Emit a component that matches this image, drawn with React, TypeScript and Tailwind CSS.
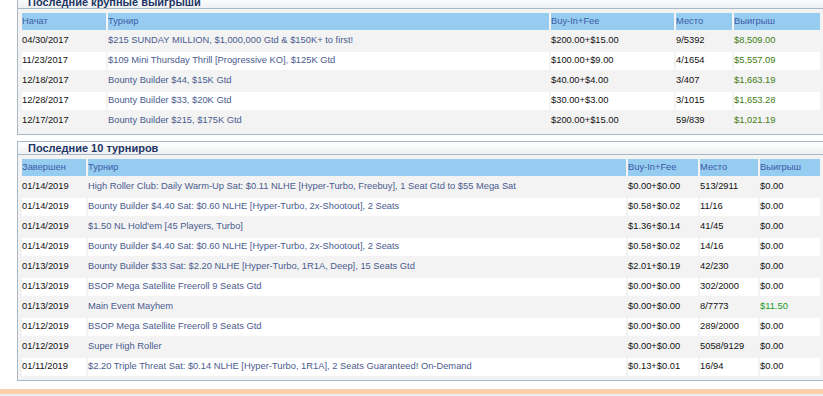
type Row = {
  date: string;
  name: string;
  buyIn: string;
  place: string;
  prize: string;
  won?: boolean;
};

const bigWins: Row[] = [
  { date: "04/30/2017", name: "$215 SUNDAY MILLION, $1,000,000 Gtd & $150K+ to first!", buyIn: "$200.00+$15.00", place: "9/5392", prize: "$8,509.00", won: true },
  { date: "11/23/2017", name: "$109 Mini Thursday Thrill [Progressive KO], $125K Gtd", buyIn: "$100.00+$9.00", place: "4/1654", prize: "$5,557.09", won: true },
  { date: "12/18/2017", name: "Bounty Builder $44, $15K Gtd", buyIn: "$40.00+$4.00", place: "3/407", prize: "$1,663.19", won: true },
  { date: "12/28/2017", name: "Bounty Builder $33, $20K Gtd", buyIn: "$30.00+$3.00", place: "3/1015", prize: "$1,653.28", won: true },
  { date: "12/17/2017", name: "Bounty Builder $215, $175K Gtd", buyIn: "$200.00+$15.00", place: "59/839", prize: "$1,021.19", won: true },
];

const lastTen: Row[] = [
  { date: "01/14/2019", name: "High Roller Club: Daily Warm-Up Sat: $0.11 NLHE [Hyper-Turbo, Freebuy], 1 Seat Gtd to $55 Mega Sat", buyIn: "$0.00+$0.00", place: "513/2911", prize: "$0.00" },
  { date: "01/14/2019", name: "Bounty Builder $4.40 Sat: $0.60 NLHE [Hyper-Turbo, 2x-Shootout], 2 Seats", buyIn: "$0.58+$0.02", place: "11/16", prize: "$0.00" },
  { date: "01/14/2019", name: "$1.50 NL Hold'em [45 Players, Turbo]", buyIn: "$1.36+$0.14", place: "41/45", prize: "$0.00" },
  { date: "01/14/2019", name: "Bounty Builder $4.40 Sat: $0.60 NLHE [Hyper-Turbo, 2x-Shootout], 2 Seats", buyIn: "$0.58+$0.02", place: "14/16", prize: "$0.00" },
  { date: "01/13/2019", name: "Bounty Builder $33 Sat: $2.20 NLHE [Hyper-Turbo, 1R1A, Deep], 15 Seats Gtd", buyIn: "$2.01+$0.19", place: "42/230", prize: "$0.00" },
  { date: "01/13/2019", name: "BSOP Mega Satellite Freeroll 9 Seats Gtd", buyIn: "$0.00+$0.00", place: "302/2000", prize: "$0.00" },
  { date: "01/13/2019", name: "Main Event Mayhem", buyIn: "$0.00+$0.00", place: "8/7773", prize: "$11.50", won: true },
  { date: "01/12/2019", name: "BSOP Mega Satellite Freeroll 9 Seats Gtd", buyIn: "$0.00+$0.00", place: "289/2000", prize: "$0.00" },
  { date: "01/12/2019", name: "Super High Roller", buyIn: "$0.00+$0.00", place: "5058/9129", prize: "$0.00" },
  { date: "01/11/2019", name: "$2.20 Triple Threat Sat: $0.14 NLHE [Hyper-Turbo, 1R1A], 2 Seats Guaranteed! On-Demand", buyIn: "$0.13+$0.01", place: "16/94", prize: "$0.00" },
];

type PanelProps = {
  title: string;
  firstCol: string;
  widths: string[];
  rows: Row[];
  prizeColor: string;
  className?: string;
};

function Panel({ title, firstCol, widths, rows, prizeColor, className }: PanelProps) {
  const heads = [firstCol, "Турнир", "Buy-In+Fee", "Место", "Выигрыш"];
  return (
    <section className={"w-[808px] ml-[17px] border border-[#a9b8c4] bg-[#f3f3f3] " + (className ?? "")}>
      <div className="h-[13px] flex items-center pl-[10px] border-b border-[#a9b8c4] bg-gradient-to-b from-white to-[#eef0f2]">
        <h2 className="text-[11px] leading-none font-bold text-[#1e3564]">{title}</h2>
      </div>
      <div className="p-[2px]">
        <table className="w-full table-fixed border-separate border-spacing-[2px] text-[9.33px] leading-none">
          <colgroup>
            {widths.map((w, i) => (
              <col key={i} className={w} />
            ))}
          </colgroup>
          <thead>
            <tr>
              {heads.map((h) => (
                <th key={h} className="h-[17px] p-0 text-left font-normal bg-[#95ccef] text-[#3e5ba8] whitespace-nowrap overflow-hidden">
                  {h}
                </th>
              ))}
            </tr>
          </thead>
          <tbody>
            {rows.map((r, i) => {
              const bg = i % 2 === 1 ? "bg-white" : "";
              return (
                <tr key={i}>
                  <td className={`h-[18px] p-0 text-[#111] ${bg}`}>{r.date}</td>
                  <td className={`h-[18px] p-0 text-[#4b5b8e] whitespace-nowrap overflow-hidden ${bg}`}>{r.name}</td>
                  <td className={`h-[18px] p-0 text-[#111] ${bg}`}>{r.buyIn}</td>
                  <td className={`h-[18px] p-0 text-[#111] ${bg}`}>{r.place}</td>
                  <td className={`h-[18px] p-0 ${r.won ? prizeColor : "text-[#111]"} ${bg}`}>{r.prize}</td>
                </tr>
              );
            })}
          </tbody>
        </table>
      </div>
    </section>
  );
}

export default function App() {
  return (
    <div className="w-[823px] h-[396px] overflow-hidden bg-white font-['Liberation_Sans',Arial,sans-serif]">
      <Panel
        title="Последние крупные выигрыши"
        firstCol="Начат"
        widths={["w-[84px]", "w-[441px]", "w-[123px]", "w-[56px]", "w-[86px]"]}
        rows={bigWins}
        prizeColor="text-[#3f7d12]"
        className="-mt-[5px]"
      />
      <Panel
        title="Последние 10 турниров"
        firstCol="Завершен"
        widths={["w-[64px]", "w-[538px]", "w-[70px]", "w-[58px]", "w-[60px]"]}
        rows={lastTen}
        prizeColor="text-[#1f9a1f]"
        className="mt-[6px]"
      />
      <div className="h-[8px]" />
      <div className="h-[5px] bg-[#fbd0ab]" />
      <div className="h-[10px] bg-[#ececec]" />
    </div>
  );
}
